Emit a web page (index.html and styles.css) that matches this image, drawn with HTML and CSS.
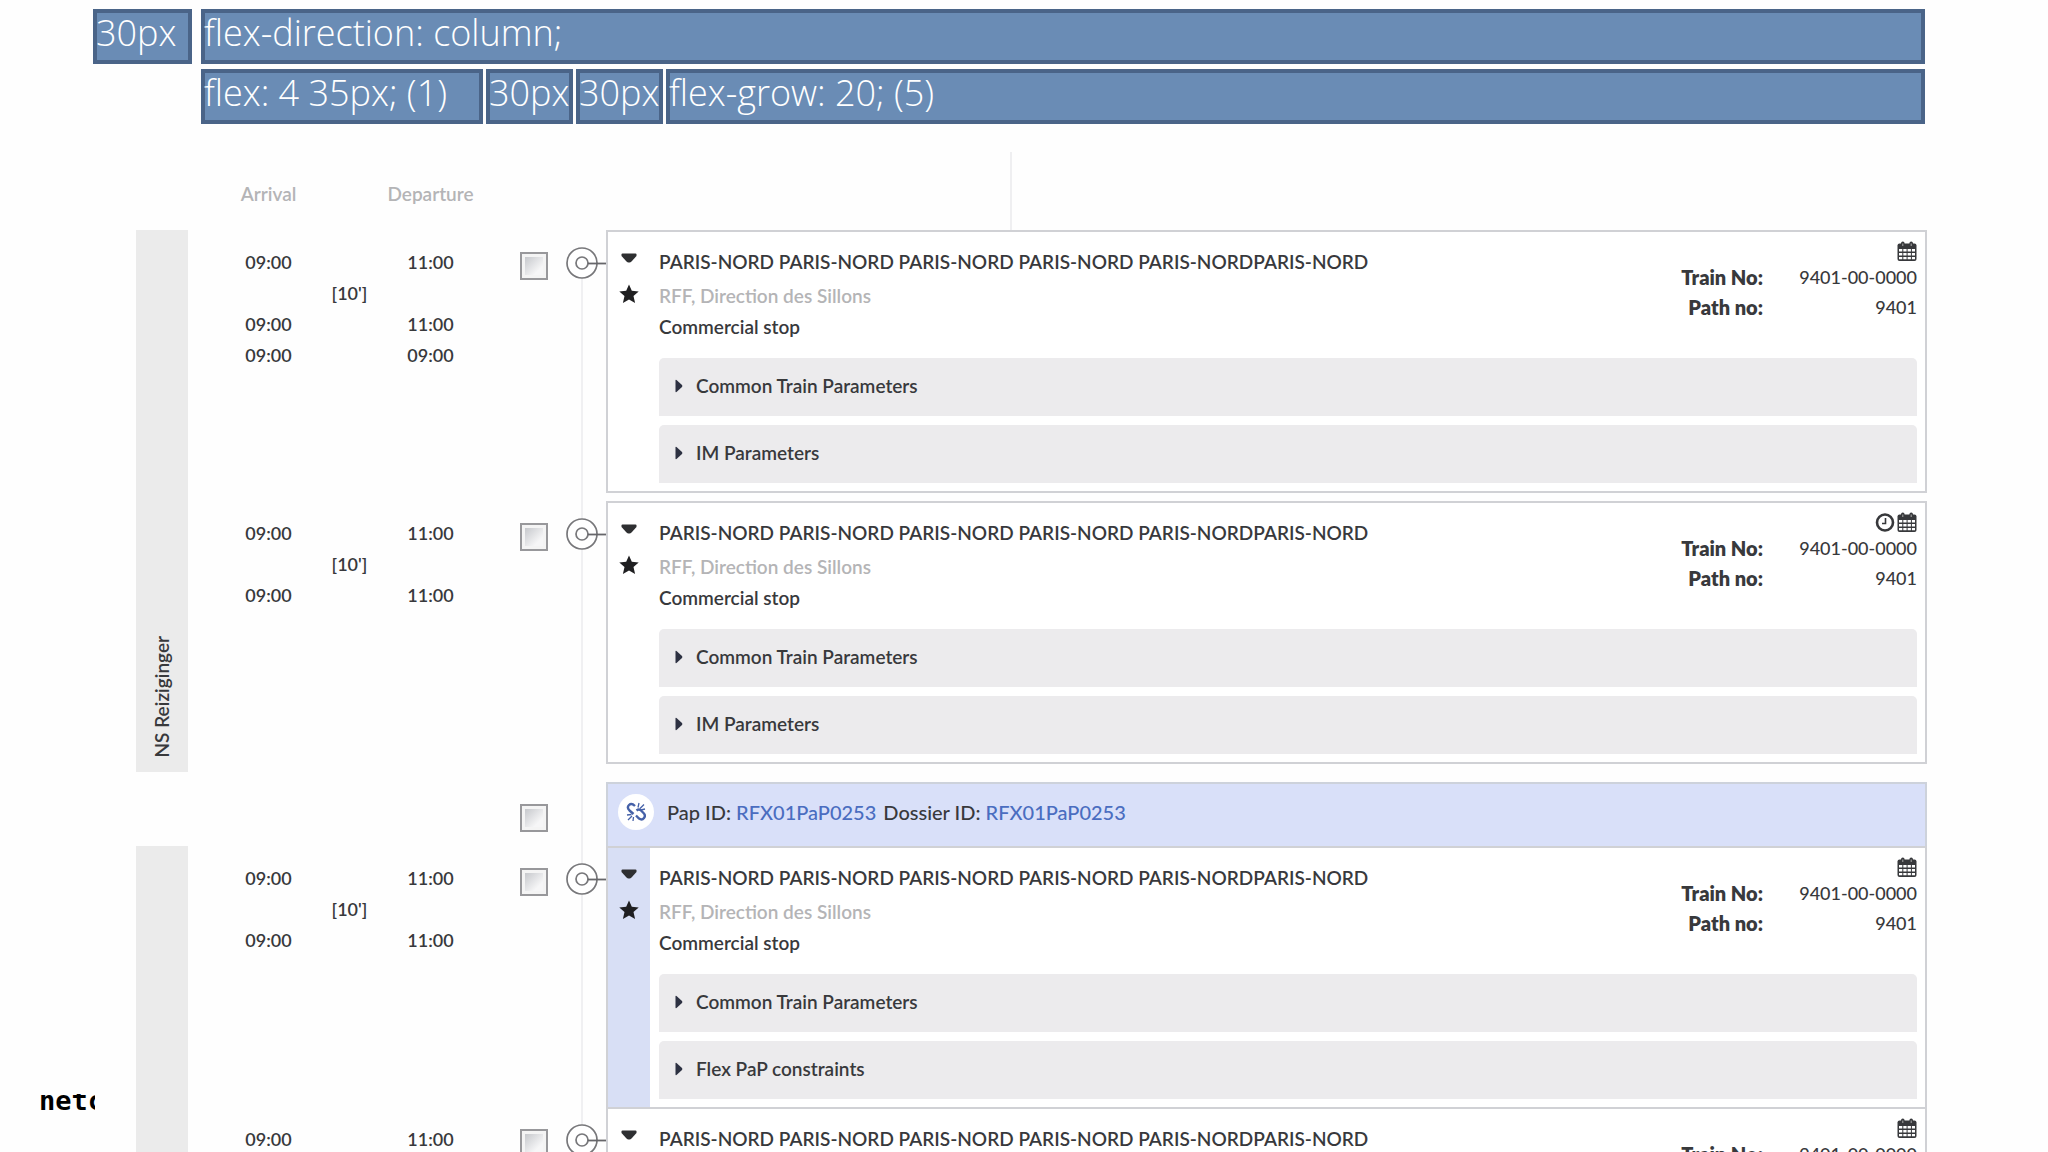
FILE: index.html
```html
<!DOCTYPE html>
<html lang="en">
<head>
    <meta charset="UTF-8">
    <meta name="viewport" content="width=device-width, initial-scale=1.0">
    <title>Train path</title>
    <link rel="stylesheet" href="styles.css">
</head>

<body>
    <!-- shared icons -->
    <svg class="icons" aria-hidden="true">
        <symbol id="node" viewBox="0 0 40 32">
            <circle cx="16" cy="16" r="15" fill="#fff" stroke="#77777a" stroke-width="1.7" />
            <circle cx="16" cy="16" r="6" fill="none" stroke="#77777a" stroke-width="1.7" />
            <path d="M22 16.5H40" stroke="#66666a" stroke-width="1.8" />
        </symbol>
        <symbol id="down" viewBox="0 0 16 10">
            <path d="M1.5 0.5h13q1 0 1 1v1.5L10.500 8.500q-1 1-2 1h-1q-1 0-2-1L.5 3V1.500q0-1 1-1z" fill="#2e2f31" />
        </symbol>
        <symbol id="right" viewBox="0 0 8 14">
            <path d="M0.500 1.500q0-1 1 -.5L7 6q.7 1 0 2L1.500 13q-1 .5-1-.5z" fill="#2d3142" />
        </symbol>
        <symbol id="star" viewBox="0 0 20 20">
            <path d="M10 .5l2.800 6.300 6.900.7-5.200 4.500 1.600 7L10 15.400 3.900 19l1.600-7L.3 7.500l6.900-.7z" fill="#1f1f21" />
        </symbol>
        <symbol id="calendar" viewBox="0 0 20 21">
            <path d="M2.500 2.500h15q2 0 2 2v13.500q0 2-2 2h-15q-2 0-2-2V4.500q0-2 2-2z" fill="#37383b" />
            <path d="M4 3.500V2.500q0-2 1.800-2t1.800 2v1M12.400 3.500V2.500q0-2 1.800-2t1.800 2v1" fill="#37383b" />
            <path d="M5.800 2.500v2.500M14.200 2.500v2.500" stroke="#aaa" stroke-width="1" />
            <path d="M2 8h3.300v2.500H2zM6.300 8h3.300v2.500H6.300zM10.600 8h3.300v2.500h-3.300zM14.900 8H18v2.500h-3.100zM2 12h3.300v2.500H2zM6.300 12h3.300v2.500H6.300zM10.600 12h3.300v2.500h-3.300zM14.900 12H18v2.500h-3.100zM2 16h3.300v2.300H2zM6.300 16h3.300v2.300H6.300zM10.600 16h3.300v2.300h-3.300zM14.900 16H18v2.300h-3.100z" fill="#fff" />
        </symbol>
        <symbol id="clock" viewBox="0 0 20 20">
            <circle cx="10" cy="10" r="8" fill="none" stroke="#37383b" stroke-width="2.600" />
            <path d="M10.500 5.500v5.500H7" fill="none" stroke="#37383b" stroke-width="1.600" />
        </symbol>
        <symbol id="unlink" viewBox="0 0 20 20">
            <path d="M9 4Q5.500 .5 3 3T3.500 8.500L7.500 12M10.500 8.500q2.500-2 4.500 0l2.500 2.500q2.500 2.500 .5 5t-5 .5L10 13.500" fill="none" stroke="#4561a8" stroke-width="2.400" />
            <path d="M12 5.500l1-4.500M14 6.500l4-4M15 8l4-1M1 13l4.500-.5M2 18l4-4M7 19l.500-4" stroke="#4561a8" stroke-width="1.300" />
        </symbol>
    </svg>

    <div class="slide">
        <div class="legend">
            <div class="box">30px</div>
            <div class="legend-main">
                <div class="box">flex-direction: column;</div>
                <div class="legend-row">
                    <div class="box times-box">flex: 4 35px; (1)</div>
                    <div class="box small-box">30px</div>
                    <div class="box small-box">30px</div>
                    <div class="box grow-box">flex-grow: 20; (5)</div>
                </div>
            </div>
        </div>

        <main class="path">
            <div class="row head">
                <div class="times">
                    <span class="arr">Arrival</span>
                    <span class="dep">Departure</span>
                </div>
                <div class="guide"></div>
            </div>

            <section class="group">
                <div class="owner"><span>NS Reiziginger</span></div>
                <div class="rows">
                    <div class="row">
                        <div class="times">
                            <span class="arr">09:00</span><span class="dep">11:00</span>
                            <span class="wait">[10']</span>
                            <span class="arr">09:00</span><span class="dep">11:00</span>
                            <span class="arr">09:00</span><span class="dep">09:00</span>
                        </div>
                        <input type="checkbox" aria-label="Select stop 1">
                        <div class="rail"><svg><use href="#node" /></svg></div>
                        <article class="card">
                            <div class="gutter">
                                <button aria-label="Collapse"><svg class="down"><use href="#down" /></svg></button>
                                <svg class="star"><use href="#star" /></svg>
                            </div>
                            <div class="content">
                                <div class="top">
                                    <div class="info">
                                        <h2>PARIS-NORD PARIS-NORD PARIS-NORD PARIS-NORD PARIS-NORDPARIS-NORD</h2>
                                        <p class="operator">RFF, Direction des Sillons</p>
                                        <p class="stop">Commercial stop</p>
                                    </div>
                                    <div class="meta">
                                        <div class="flags"><svg><use href="#calendar" /></svg></div>
                                        <dl>
                                            <dt>Train No:</dt><dd>9401-00-0000</dd>
                                            <dt>Path no:</dt><dd>9401</dd>
                                        </dl>
                                    </div>
                                </div>
                                <button class="panel"><svg><use href="#right" /></svg>Common Train Parameters</button>
                                <button class="panel"><svg><use href="#right" /></svg>IM Parameters</button>
                            </div>
                        </article>
                    </div>

                    <div class="row">
                        <div class="times">
                            <span class="arr">09:00</span><span class="dep">11:00</span>
                            <span class="wait">[10']</span>
                            <span class="arr">09:00</span><span class="dep">11:00</span>
                        </div>
                        <input type="checkbox" aria-label="Select stop 2">
                        <div class="rail"><svg><use href="#node" /></svg></div>
                        <article class="card">
                            <div class="gutter">
                                <button aria-label="Collapse"><svg class="down"><use href="#down" /></svg></button>
                                <svg class="star"><use href="#star" /></svg>
                            </div>
                            <div class="content">
                                <div class="top">
                                    <div class="info">
                                        <h2>PARIS-NORD PARIS-NORD PARIS-NORD PARIS-NORD PARIS-NORDPARIS-NORD</h2>
                                        <p class="operator">RFF, Direction des Sillons</p>
                                        <p class="stop">Commercial stop</p>
                                    </div>
                                    <div class="meta">
                                        <div class="flags"><svg><use href="#clock" /></svg><svg><use href="#calendar" /></svg></div>
                                        <dl>
                                            <dt>Train No:</dt><dd>9401-00-0000</dd>
                                            <dt>Path no:</dt><dd>9401</dd>
                                        </dl>
                                    </div>
                                </div>
                                <button class="panel"><svg><use href="#right" /></svg>Common Train Parameters</button>
                                <button class="panel"><svg><use href="#right" /></svg>IM Parameters</button>
                            </div>
                        </article>
                    </div>
                </div>
            </section>

            <div class="row pap-row">
                <div class="times"></div>
                <input type="checkbox" aria-label="Select PaP">
                <div class="rail"></div>
                <div class="pap">
                    <span class="badge"><svg><use href="#unlink" /></svg></span>
                    <span>Pap ID: <a href="#">RFX01PaP0253</a></span>
                    <span>Dossier ID: <a href="#">RFX01PaP0253</a></span>
                </div>
            </div>

            <section class="group joined">
                <div class="owner"></div>
                <div class="rows">
                    <div class="row">
                        <div class="times">
                            <span class="arr">09:00</span><span class="dep">11:00</span>
                            <span class="wait">[10']</span>
                            <span class="arr">09:00</span><span class="dep">11:00</span>
                        </div>
                        <input type="checkbox" aria-label="Select stop 3">
                        <div class="rail"><svg><use href="#node" /></svg></div>
                        <article class="card in-pap">
                            <div class="gutter">
                                <button aria-label="Collapse"><svg class="down"><use href="#down" /></svg></button>
                                <svg class="star"><use href="#star" /></svg>
                            </div>
                            <div class="content">
                                <div class="top">
                                    <div class="info">
                                        <h2>PARIS-NORD PARIS-NORD PARIS-NORD PARIS-NORD PARIS-NORDPARIS-NORD</h2>
                                        <p class="operator">RFF, Direction des Sillons</p>
                                        <p class="stop">Commercial stop</p>
                                    </div>
                                    <div class="meta">
                                        <div class="flags"><svg><use href="#calendar" /></svg></div>
                                        <dl>
                                            <dt>Train No:</dt><dd>9401-00-0000</dd>
                                            <dt>Path no:</dt><dd>9401</dd>
                                        </dl>
                                    </div>
                                </div>
                                <button class="panel"><svg><use href="#right" /></svg>Common Train Parameters</button>
                                <button class="panel"><svg><use href="#right" /></svg>Flex PaP constraints</button>
                            </div>
                        </article>
                    </div>

                    <div class="row">
                        <div class="times">
                            <span class="arr">09:00</span><span class="dep">11:00</span>
                        </div>
                        <input type="checkbox" aria-label="Select stop 4">
                        <div class="rail"><svg><use href="#node" /></svg></div>
                        <article class="card">
                            <div class="gutter">
                                <button aria-label="Collapse"><svg class="down"><use href="#down" /></svg></button>
                            </div>
                            <div class="content">
                                <div class="top">
                                    <div class="info">
                                        <h2>PARIS-NORD PARIS-NORD PARIS-NORD PARIS-NORD PARIS-NORDPARIS-NORD</h2>
                                    </div>
                                    <div class="meta">
                                        <div class="flags"><svg><use href="#calendar" /></svg></div>
                                        <dl>
                                            <dt>Train No:</dt><dd>9401-00-0000</dd>
                                        </dl>
                                    </div>
                                </div>
                            </div>
                        </article>
                    </div>
                </div>
            </section>
        </main>

        <div class="logo">netc</div>
    </div>
</body>

</html>
```

FILE: styles.css
```css
* {
    box-sizing: border-box;
}

body {
    margin: 0;
    background: #fefefe;
    color: #38393c;
    font: 600 19px/30px Lato, "Open Sans", sans-serif;
}

h2, p, dl, dd {
    margin: 0;
}

button {
    border: 0;
    padding: 0;
    background: none;
    color: inherit;
    font: inherit;
}

svg {
    display: block;
}

.icons {
    position: absolute;
    width: 0;
    height: 0;
}

.slide {
    position: relative;
    height: 100vh;
    overflow: hidden;
    padding: 9px 121px 0 136px;
}

/* blue flex legend */
.legend {
    display: flex;
    align-items: flex-start;
    gap: 9px;
    margin: 0 2px 28px -43px;
    color: #fff;
    font: 300 36px/40px "Open Sans", sans-serif;
}

.legend-main {
    flex: 1;
    display: flex;
    flex-direction: column;
    gap: 5px;
}

.legend-row {
    display: flex;
    gap: 3px;
}

.box {
    height: 55px;
    border: 4px solid #4a6488;
    background: #6a8cb5;
    text-indent: -1px;
    white-space: nowrap;
}

.legend > .box {
    width: 99px;
}

.times-box {
    width: 282px;
}

.small-box {
    width: 87px;
}

.grow-box {
    flex: 1;
}

/* rows */
.row {
    display: grid;
    grid-template-columns: 332px 28px 58px 1fr;
    align-items: start;
}

.head,
.pap-row {
    margin-left: 52px;
}

.times {
    display: grid;
    grid-template-columns: repeat(3, 81px);
    justify-items: center;
    padding: 17px 0 0 40px;
    font-size: 18px;
    line-height: 31px;
}

.arr {
    grid-column: 1;
}

.wait {
    grid-column: 2;
}

.dep {
    grid-column: 3;
}

.head .times {
    padding-top: 26px;
    color: #b4b4b6;
    font-size: 19px;
}

.guide {
    grid-column: 4;
    height: 78px;
    margin-left: 404px;
    border-left: 2px solid #efeff1;
}

.group {
    display: flex;
}

.owner {
    width: 52px;
    display: flex;
    align-items: flex-end;
    justify-content: center;
    padding-bottom: 14px;
    background: #ebebeb;
}

.owner span {
    writing-mode: vertical-rl;
    transform: rotate(180deg);
}

.rows {
    flex: 1;
}

input[type="checkbox"] {
    appearance: none;
    width: 28px;
    height: 28px;
    margin: 22px 0 0;
    border: 2px solid #98989b;
    background: linear-gradient(135deg, #c6c8cc, #f6f6f7 75%) content-box, #f4f4f4;
    padding: 3px;
}

.rail {
    position: relative;
    align-self: stretch;
    padding: 17px 0 0 18px;
}

.rail::before {
    content: "";
    position: absolute;
    top: 0;
    bottom: 0;
    left: 33px;
    width: 2px;
    background: #f0f0f2;
}

.head + .group .row:first-child .rail::before {
    top: 32px;
}

.rail svg {
    position: relative;
    width: 40px;
    height: 32px;
}

.card {
    display: flex;
    gap: 9px;
    margin-bottom: 8px;
    border: 2px solid #d0d1d5;
    background: #fff;
}

.joined .card {
    margin-bottom: 0;
    border-bottom: 0;
}

.gutter {
    width: 42px;
    display: flex;
    flex-direction: column;
    align-items: center;
    gap: 21px;
    padding-top: 21px;
}

.in-pap .gutter {
    background: #d8dff5;
}

.down {
    width: 16px;
    height: 10px;
}

.star {
    width: 20px;
    height: 20px;
}

.content {
    flex: 1;
    padding: 9px 8px 8px 0;
}

.top {
    display: flex;
    justify-content: space-between;
    margin-bottom: 17px;
}

.info {
    padding-top: 4px;
}

h2 {
    font-size: 19px;
    font-weight: 600;
    line-height: 34px;
}

.operator {
    color: #b4b4b6;
    line-height: 34px;
}

.stop {
    line-height: 28px;
}

.flags {
    display: flex;
    justify-content: flex-end;
    gap: 2px;
    height: 21px;
}

.flags svg {
    width: 20px;
    height: 21px;
}

dl {
    display: grid;
    grid-template-columns: auto 154px;
    text-align: right;
}

dt {
    font-size: 20px;
    font-weight: 800;
}

dd {
    font-size: 18px;
    font-weight: 500;
}

.panel {
    display: flex;
    align-items: center;
    gap: 13px;
    width: 100%;
    height: 58px;
    padding: 0 0 2px 16px;
    border-radius: 5px 5px 0 0;
    background: #ecebed;
}

.panel + .panel {
    margin-top: 9px;
}

.panel svg {
    width: 8px;
    height: 14px;
}

/* PaP header */
.pap-row {
    margin-top: 10px;
}

/* the rail runs on through the gap above */
.pap-row .rail::before {
    top: -10px;
}

.pap {
    display: flex;
    align-items: center;
    gap: 7px;
    height: 64px;
    padding: 0 10px 7px;
    border: 2px solid #cdd2db;
    border-bottom: 0;
    background: #d9e0f9;
    font-size: 20px;
    font-weight: 500;
}

.pap a {
    color: #4a6dc0;
    text-decoration: none;
}

.badge {
    display: grid;
    place-items: center;
    width: 36px;
    height: 36px;
    margin-right: 6px;
    border-radius: 50%;
    background: #fff;
}

.badge svg {
    width: 20px;
    height: 20px;
}

/* only the start of the wordmark shows */
.logo {
    position: absolute;
    left: 39px;
    bottom: 41px;
    width: 56px;
    height: 17px;
    overflow: hidden;
    color: #000;
    font: bold 27px/14px "DejaVu Sans Mono", monospace;
}
```
